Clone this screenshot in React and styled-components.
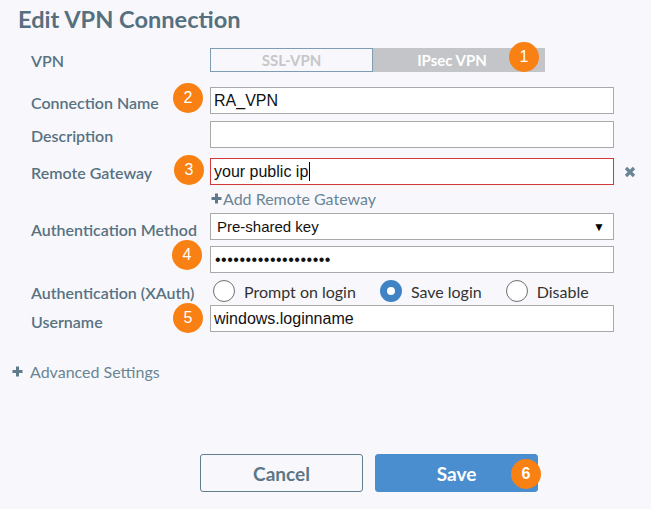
import React from "react";
import styled, { createGlobalStyle } from "styled-components";

const Global = createGlobalStyle`
  html, body { margin: 0; padding: 0; background: #f8f8fc; }
  body { font-family: Lato, "Noto Sans", sans-serif; }
`;

const Page = styled.div`
  width: 651px;
  height: 509px;
  box-sizing: border-box;
  background: #f8f8fc;
  display: flex;
  flex-direction: column;
  overflow: hidden;
`;

const Title = styled.h1`
  margin: 4px 0 0 18px;
  height: 30px;
  font-family: Lato, sans-serif;
  font-weight: 700;
  font-size: 23.6px;
  line-height: 30px;
  color: #56707f;
`;

const Row = styled.div`
  display: grid;
  grid-template-columns: 179px 404px auto;
  align-items: center;
  padding-left: 31px;
  margin-top: ${(p) => p.$mt}px;
  height: ${(p) => p.$h}px;
`;

const Label = styled.div`
  font-family: Lato, sans-serif;
  font-weight: 600;
  font-size: 16px;
  color: #587282;
  padding-top: ${(p) => p.$pt ?? 4}px;
  white-space: nowrap;
`;

const Field = styled.div`
  position: relative;
  height: 100%;
  display: flex;
  align-items: center;
`;

const Input = styled.div`
  box-sizing: border-box;
  width: 100%;
  height: 27px;
  border: 1px solid ${(p) => (p.$error ? "#d23a3a" : "#a9a9a9")};
  background: #fff;
  display: flex;
  align-items: center;
  padding: 0 3px;
  font-family: "Liberation Sans", Arial, sans-serif;
  font-size: 16px;
  color: #111;
  white-space: nowrap;
`;

const Caret = styled.span`
  display: inline-block;
  width: 1px;
  height: 19px;
  background: #000;
  margin-left: 1px;
`;

const Select = styled(Input)`
  justify-content: space-between;
  padding: 0 8px 0 6px;
  font-size: 15px;
`;

const Arrow = styled.span`
  font-size: 12px;
  color: #000;
`;

const Dots = styled.span`
  font-size: 16px;
  letter-spacing: 0.5px;
  padding-left: 1px;
`;

const Badge = styled.div`
  position: absolute;
  width: 30px;
  height: 30px;
  border-radius: 50%;
  background: #f98012;
  color: #fff;
  font-family: "Liberation Sans", Arial, sans-serif;
  font-size: 16px;
  display: flex;
  align-items: center;
  justify-content: center;
  left: ${(p) => (p.$left !== undefined ? `${p.$left}px` : "auto")};
  right: ${(p) => (p.$right !== undefined ? `${p.$right}px` : "auto")};
  top: ${(p) => p.$top}px;
  z-index: 2;
`;

const Toggle = styled.div`
  position: relative;
  display: flex;
  width: 335px;
  height: 24px;
`;

const ToggleOpt = styled.div`
  box-sizing: border-box;
  width: ${(p) => p.$w}px;
  height: 100%;
  display: flex;
  align-items: center;
  justify-content: center;
  font-family: Lato, sans-serif;
  font-weight: 700;
  font-size: 15px;
  border: ${(p) => (p.$active ? "none" : "1px solid #7e9db2")};
  background: ${(p) => (p.$active ? "#c4c5c8" : "#f8f8fc")};
  color: ${(p) => (p.$active ? "#ffffff" : "#c6c6c8")};
  padding-right: ${(p) => (p.$active ? 14 : 0)}px;
`;

const RemoveIcon = styled.svg`
  margin-left: 10px;
  width: 12px;
  height: 12px;
`;

const AddLink = styled.div`
  display: flex;
  align-items: center;
  font-family: Lato, sans-serif;
  font-size: 16px;
  color: #6a8595;
  padding-left: 1px;
`;

const PlusIcon = styled.svg`
  width: 11px;
  height: 11px;
  margin-right: ${(p) => p.$gap}px;
`;

const Radios = styled.div`
  display: flex;
  align-items: center;
  gap: 24px;
  padding-left: 3px;
`;

const RadioItem = styled.label`
  display: flex;
  align-items: center;
  gap: 9px;
  font-family: Lato, sans-serif;
  font-size: 16px;
  color: #333;
`;

const RadioCircle = styled.span`
  box-sizing: border-box;
  width: 22px;
  height: 22px;
  border-radius: 50%;
  border: ${(p) => (p.$on ? "7px solid #3f83c4" : "1px solid #707070")};
  background: #fff;
`;

const Advanced = styled.div`
  margin-top: 30px;
  height: 18px;
  padding-left: 12px;
  display: flex;
  align-items: center;
  font-family: Lato, sans-serif;
  font-size: 16px;
  color: #6a8595;
`;

const Buttons = styled.div`
  margin-top: 74px;
  padding-left: 200px;
  display: flex;
  gap: 12px;
`;

const Button = styled.div`
  position: relative;
  box-sizing: border-box;
  width: 163px;
  height: 38px;
  border-radius: 3px;
  display: flex;
  align-items: center;
  justify-content: center;
  font-family: Lato, sans-serif;
  font-weight: 700;
  font-size: 19px;
  border: 1px solid ${(p) => (p.$primary ? "#4a8ed0" : "#5f7d8c")};
  background: ${(p) => (p.$primary ? "#4a8ed0" : "#f8f8fc")};
  color: ${(p) => (p.$primary ? "#ffffff" : "#5c7686")};
`;

const Plus = ({ gap = 1, color = "#5f7a8a" }) => (
  <PlusIcon $gap={gap} viewBox="0 0 11 11">
    <path d="M5.5 0.5V10.5M0.5 5.5H10.5" stroke={color} strokeWidth="3" />
  </PlusIcon>
);

export default function App() {
  return (
    <Page>
      <Global />
      <Title>Edit VPN Connection</Title>

      <Row $mt={14} $h={24}>
        <Label $pt={0}>VPN</Label>
        <Field>
          <Toggle>
            <ToggleOpt $w={163}>SSL-VPN</ToggleOpt>
            <ToggleOpt $w={172} $active>IPsec VPN</ToggleOpt>
            <Badge $right={6} $top={-6}>1</Badge>
          </Toggle>
        </Field>
      </Row>

      <Row $mt={15} $h={27}>
        <Label>Connection Name</Label>
        <Field>
          <Badge $left={-37} $top={-4}>2</Badge>
          <Input>RA_VPN</Input>
        </Field>
      </Row>

      <Row $mt={7} $h={27}>
        <Label $pt={2}>Description</Label>
        <Field>
          <Input />
        </Field>
      </Row>

      <Row $mt={10} $h={27}>
        <Label $pt={2}>Remote Gateway</Label>
        <Field>
          <Badge $left={-36} $top={-3}>3</Badge>
          <Input $error>
            your public ip<Caret />
          </Input>
        </Field>
        <RemoveIcon viewBox="0 0 12 12">
          <path d="M2 2L10 10M10 2L2 10" stroke="#6a8494" strokeWidth="3.2" />
        </RemoveIcon>
      </Row>

      <Row $mt={4} $h={18}>
        <span />
        <AddLink>
          <Plus gap={1} />
          Add Remote Gateway
        </AddLink>
      </Row>

      <Row $mt={6} $h={27}>
        <Label $pt={6}>Authentication Method</Label>
        <Field>
          <Select>
            <span>Pre-shared key</span>
            <Arrow>▼</Arrow>
          </Select>
        </Field>
      </Row>

      <Row $mt={6} $h={27}>
        <span />
        <Field>
          <Badge $left={-38} $top={-6}>4</Badge>
          <Input>
            <Dots>•••••••••••••••••••</Dots>
          </Input>
        </Field>
      </Row>

      <Row $mt={6} $h={24}>
        <Label $pt={2}>Authentication (XAuth)</Label>
        <Radios>
          <RadioItem>
            <RadioCircle />
            Prompt on login
          </RadioItem>
          <RadioItem>
            <RadioCircle $on />
            Save login
          </RadioItem>
          <RadioItem>
            <RadioCircle />
            Disable
          </RadioItem>
        </Radios>
      </Row>

      <Row $mt={2} $h={27}>
        <Label $pt={6}>Username</Label>
        <Field>
          <Badge $left={-37} $top={-2}>5</Badge>
          <Input>windows.loginname</Input>
        </Field>
      </Row>

      <Advanced>
        <Plus gap={7} />
        Advanced Settings
      </Advanced>

      <Buttons>
        <Button>Cancel</Button>
        <Button $primary>
          Save
          <Badge $right={-4} $top={4}>6</Badge>
        </Button>
      </Buttons>
    </Page>
  );
}
